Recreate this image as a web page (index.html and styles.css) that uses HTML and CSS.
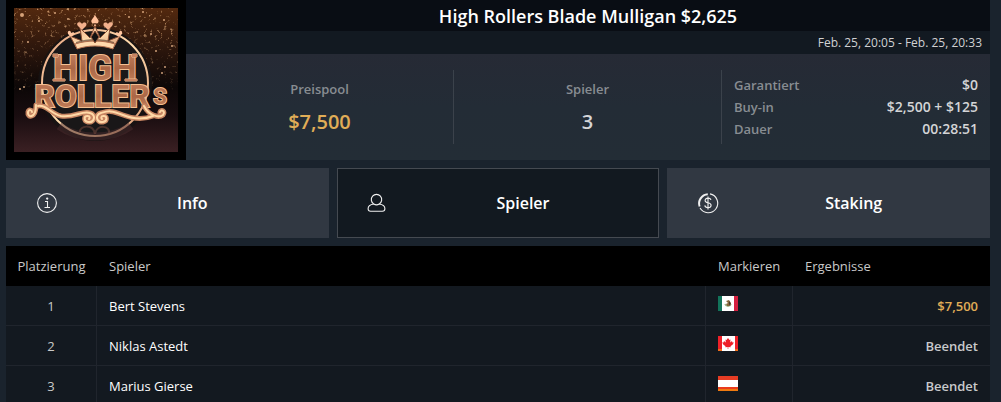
FILE: index.html
```html
<!DOCTYPE html>
<html lang="de">
<head>
    <meta charset="UTF-8" />
    <meta name="viewport" content="width=device-width, initial-scale=1" />
    <title>High Rollers Blade Mulligan $2,625</title>
    <link rel="stylesheet" href="styles.css">
</head>
<body>
    <main class="lobby">
        <header class="tournament">
            <div class="logo">
                <svg viewBox="0 0 164 144" role="img" aria-label="High Rollers">
                    <defs>
                        <linearGradient id="sky" x1="0" y1="0" x2="0" y2="1">
                            <stop offset="0" stop-color="#53290f" />
                            <stop offset="0.3" stop-color="#2a150c" />
                            <stop offset="0.55" stop-color="#0c0707" />
                            <stop offset="0.75" stop-color="#190d10" />
                            <stop offset="1" stop-color="#3b2023" />
                        </linearGradient>
                        <linearGradient id="fade" x1="0" y1="0" x2="0" y2="1">
                            <stop offset="0" stop-color="#ccc" />
                            <stop offset="0.4" stop-color="#666" />
                            <stop offset="0.6" stop-color="#000" />
                        </linearGradient>
                        <linearGradient id="copper" x1="0" y1="0" x2="0" y2="1">
                            <stop offset="0" stop-color="#c98462" />
                            <stop offset="0.5" stop-color="#aa6746" />
                            <stop offset="1" stop-color="#cd8963" />
                        </linearGradient>
                        <linearGradient id="gold" x1="0" y1="0" x2="1" y2="1">
                            <stop offset="0" stop-color="#e9a47f" />
                            <stop offset="0.5" stop-color="#ffdcae" />
                            <stop offset="1" stop-color="#dc9872" />
                        </linearGradient>
                        <mask id="fadeMask">
                            <rect width="164" height="144" fill="url(#fade)" />
                        </mask>
                        <filter id="glitter" x="0" y="0" width="1" height="1">
                            <feTurbulence type="fractalNoise" baseFrequency="0.3" numOctaves="3" seed="7" />
                            <feColorMatrix values="0 0 0 0 0.75  0 0 0 0 0.42  0 0 0 0 0.2  5 0 0 0 -3.1" />
                        </filter>
                    </defs>
                    <rect width="164" height="144" fill="url(#sky)" />
                    <g mask="url(#fadeMask)">
                        <rect width="164" height="144" filter="url(#glitter)" />
                    </g>
                    <g fill="#f6c193" opacity="0.8">
                        <circle cx="8" cy="7" r="2" /><circle cx="25" cy="13" r="1" /><circle cx="41" cy="5" r="1" />
                        <circle cx="54" cy="11" r="1" /><circle cx="14" cy="34" r="1" /><circle cx="150" cy="12" r="1" />
                        <circle cx="137" cy="26" r="1" /><circle cx="158" cy="38" r="1" /><circle cx="151" cy="59" r="1" />
                        <circle cx="148" cy="65" r="1" /><circle cx="6" cy="81" r="1" /><circle cx="10" cy="79" r="1" />
                        <circle cx="115" cy="9" r="1" /><circle cx="129" cy="4" r="1" /><circle cx="142" cy="43" r="1" />
                    </g>
                    <circle cx="81" cy="76" r="57" fill="#161313" opacity="0.85" />
                    <circle cx="81" cy="75" r="53" fill="#191718" stroke="url(#gold)" stroke-width="2" />
                    <path d="M45 118c20 14 52 14 72 0" fill="none" stroke="#4a2c2d" stroke-width="8" opacity="0.5" />
                    <path d="M66 124c-1-6 13-9 15 2 1-10 16-9 14 0" fill="none" stroke="#7a4b40" stroke-width="2" opacity="0.5" />

                    <!-- crown -->
                    <path d="M62 39l-6-11 12 5-2-13 10 10 5-12 5 12 10-10-2 13 12-5-6 11-2-1c-11-3-23-3-34 0z" fill="url(#gold)" stroke="#8a4f35" stroke-width="1" />
                    <path d="M62 39c12-4 26-4 38 0v-5c-12-4-26-4-38 0z" fill="#24130e" opacity="0.5" />
                    <path d="M61 36c13-4 27-4 40 0l-2 5c-11-4-25-4-36 0z" fill="#ffd9ad" stroke="#b06d4d" stroke-width="1" />
                    <path d="M81 23l4 6-4 6-4-6z" fill="#111" stroke="#8a4f35" stroke-width="1" />
                    <path d="M81 7c2 4 5 5 3 8-1 1-2 0-3 0l1 3h-2l1-3c-1 0-2 1-3 0-2-3 1-4 3-8z" fill="#ffbf99" />
                    <path d="M68 22l-4-4c-3-4 3-5 4-2 2-3 6-1 4 2zM94 22l4-4c3-4-3-5-4-2-2-3-6-1-4 2z" fill="#f2b08c" />
                    <path d="M57 29l-3-3c-1-4 3-4 3-1 3-2 5 1 2 2zM105 29l3-3c1-4-3-4-3-1-3-2-5 1-2 2z" fill="#ffc6a0" />

                    <!-- lettering and scrolls -->
                    <g class="lettering" fill="url(#copper)" stroke="#f4bf91" stroke-width="2" paint-order="stroke">
                        <text class="line-high" x="81" y="72">HIGH</text>
                        <path d="M39 71h12v2H39zM111 71h12v2h-12zM39 46h5v3h-5zM118 46h5v3h-5z" fill="#c98462" stroke-width="1" />
                        <text class="line-rollers" x="78" y="99">ROLLER</text>
                        <text class="line-s" x="146" y="96">S</text>
                    </g>
                    <path d="M22 97c0 14-9 13-8 7 1-3 4-2 4 0M24 98c8-2 13 8 23 10 13 2 22-6 29-3 7 2 4 10-2 9-5-1-4-7 0-6 2 0 2 2 1 3" fill="none" stroke="#c88663" stroke-width="5" stroke-linecap="round" />
                    <path d="M130 98c5 10 15 12 19 9 3-4-2-6-3-3M139 108c-10 4-20 3-30-1-12-5-15-4-22-2-7 2-4 10 2 9 5-1 4-7 0-6-2 0-2 2-1 3" fill="none" stroke="#c88663" stroke-width="5" stroke-linecap="round" />
                    <path d="M22 97c0 14-9 13-8 7 1-3 4-2 4 0M24 98c8-2 13 8 23 10 13 2 22-6 29-3 7 2 4 10-2 9-5-1-4-7 0-6 2 0 2 2 1 3" fill="none" stroke="#ffd9a8" stroke-width="2" stroke-linecap="round" />
                    <path d="M130 98c5 10 15 12 19 9 3-4-2-6-3-3M139 108c-10 4-20 3-30-1-12-5-15-4-22-2-7 2-4 10 2 9 5-1 4-7 0-6-2 0-2 2-1 3" fill="none" stroke="#ffd9a8" stroke-width="2" stroke-linecap="round" />
                </svg>
            </div>
            <div class="summary">
                <h1>High Rollers Blade Mulligan $2,625</h1>
                <p class="date">Feb. 25, 20:05 - Feb. 25, 20:33</p>
                <div class="stats">
                    <div class="stat">
                        <span class="stat-label">Preispool</span>
                        <strong class="stat-value gold">$7,500</strong>
                    </div>
                    <div class="stat">
                        <span class="stat-label">Spieler</span>
                        <strong class="stat-value">3</strong>
                    </div>
                    <dl class="details">
                        <div><dt>Garantiert</dt><dd>$0</dd></div>
                        <div><dt>Buy-in</dt><dd>$2,500 + $125</dd></div>
                        <div><dt>Dauer</dt><dd>00:28:51</dd></div>
                    </dl>
                </div>
            </div>
        </header>

        <nav class="tabs">
            <button type="button" class="tab">
                <svg class="icon" viewBox="0 0 20 20" aria-hidden="true">
                    <circle cx="10" cy="10" r="9.4" />
                    <path d="M8 8.5h2.5v6M7.5 14.5h5.5" />
                    <circle cx="10.2" cy="5.6" r="0.6" fill="#fff" />
                </svg>
                <span>Info</span>
            </button>
            <button type="button" class="tab active">
                <svg class="icon" viewBox="0 0 20 20" aria-hidden="true">
                    <path d="M5.700 11a5.200 5.200 0 1 1 5.600 0c3 .4 5.600 2 5.600 4.700 0 1.700-1 2.500-2.500 2.500H2.600c-1.500 0-2.500-.8-2.500-2.500C.1 13 2.700 11.400 5.700 11zM5.700 11c1.700 1.100 3.900 1.100 5.600 0" />
                </svg>
                <span>Spieler</span>
            </button>
            <button type="button" class="tab">
                <svg class="icon" viewBox="0 0 20 20" aria-hidden="true">
                    <path d="M12 .9A9.500 9.500 0 1 1 2 15" />
                    <path d="M1.600 13.500A9.300 9.300 0 0 1 9.800 1.200" stroke-width="2" />
                    <path d="M13 7c-.3-1.300-1.500-1.900-3-1.900s-2.900.8-2.900 2.300c0 3.300 6 1.500 6 4.900 0 1.500-1.300 2.400-3.100 2.400s-3-.8-3.200-2.300M10 3.500v13" />
                </svg>
                <span>Staking</span>
            </button>
        </nav>

        <table class="players">
            <thead>
                <tr>
                    <th class="rank">Platzierung</th>
                    <th>Spieler</th>
                    <th class="flag">Markieren</th>
                    <th class="result-head">Ergebnisse</th>
                </tr>
            </thead>
            <tbody>
                <tr>
                    <td class="rank">1</td>
                    <td>Bert Stevens</td>
                    <td>
                        <svg class="flag-icon" viewBox="0 0 20 15" role="img" aria-label="Mexiko">
                            <rect width="20" height="15" fill="#fff" />
                            <rect width="4" height="15" fill="#12735a" />
                            <rect x="16" width="4" height="15" fill="#d51f3f" />
                            <path d="M7 8c1 3 5 3 6 0" fill="none" stroke="#9bb58b" stroke-width="1.500" />
                            <path d="M8 5l3-1 2 3-1 3H9L8 8l2-1z" fill="#86663c" />
                            <path d="M11 5l2 3-2 1z" fill="#463a2c" />
                        </svg>
                    </td>
                    <td class="result gold">$7,500</td>
                </tr>
                <tr>
                    <td class="rank">2</td>
                    <td>Niklas Astedt</td>
                    <td>
                        <svg class="flag-icon" viewBox="0 0 20 15" role="img" aria-label="Kanada">
                            <rect width="20" height="15" fill="#fff" />
                            <path d="M0 0h4v15H0zM17 0h3v15h-3z" fill="#ee2028" />
                            <path d="M0 13h4v2H0zM17 13h3v2h-3z" fill="#f06d18" />
                            <path d="M10 2l1.500 2 1-.5-.3 3L14 5l.4 1.500 1.300-.2-.7 2-2.500 2 .2 1-2.400-.3v2h-.6v-2l-2.400.3.2-1-2.500-2-.7-2 1.300.2L6 5l1.800 1.500-.3-3 1 .5z" fill="#ee2028" />
                        </svg>
                    </td>
                    <td class="result">Beendet</td>
                </tr>
                <tr>
                    <td class="rank">3</td>
                    <td>Marius Gierse</td>
                    <td>
                        <svg class="flag-icon" viewBox="0 0 20 15" role="img" aria-label="Österreich">
                            <rect width="20" height="15" fill="#fff" />
                            <rect width="20" height="4" fill="#e63c24" />
                            <rect y="11" width="20" height="2" fill="#ea3c1c" />
                            <rect y="13" width="20" height="2" fill="#ee7a10" />
                        </svg>
                    </td>
                    <td class="result">Beendet</td>
                </tr>
            </tbody>
        </table>
    </main>
</body>
</html>
```
FILE: styles.css
```css
* {
    margin: 0;
    padding: 0;
    box-sizing: border-box;
}
body {
    font-family: "Open Sans", "Noto Sans", sans-serif;
    font-size: 13px;
    color: #fff;
    background: #1a232d;
}
.lobby {
    display: flex;
    flex-direction: column;
    gap: 8px;
    padding: 0 11px 0 6px;
}
.tournament {
    display: flex;
}
.logo {
    width: 180px;
    padding: 8px;
    background: #000;
}
.logo svg {
    display: block;
    width: 100%;
}
.lettering {
    font-family: Roboto, "Liberation Sans", sans-serif;
    font-weight: 700;
    text-anchor: middle;
}
.line-high {
    font-size: 35px;
}
.line-rollers {
    font-size: 32px;
}
.line-s {
    font-size: 22px;
}
.summary {
    flex: 1;
    display: flex;
    flex-direction: column;
}
h1 {
    padding-top: 2px;
    background: #090d14;
    font-size: 18px;
    font-weight: 600;
    line-height: 29px;
    text-align: center;
}
.date {
    padding: 0 8px;
    background: #121921;
    color: #d0d1d3;
    font-size: 12px;
    line-height: 23px;
    text-align: right;
}
.stats {
    flex: 1;
    display: grid;
    grid-template-columns: repeat(3, 1fr);
    padding: 16px 0;
    background: linear-gradient(#262a35, #232c36 50%, #232d36);
    font-weight: 600;
}
.stat {
    display: flex;
    flex-direction: column;
    align-items: center;
    justify-content: center;
    gap: 9px;
    padding-top: 3px;
    border-right: 1px solid #3b424b;
}
.stat-label,
.details dt {
    color: #888d92;
}
.stat-value {
    color: #d4d5d7;
    font-size: 20px;
    font-weight: 600;
    line-height: 30px;
}
.gold {
    color: #e0ad57;
}
.details {
    padding: 4px 12px;
    line-height: 22px;
}
.details div {
    display: flex;
    justify-content: space-between;
}
.details dd {
    color: #d4d5d7;
    font-size: 14px;
}
.tabs {
    display: grid;
    grid-template-columns: repeat(3, 1fr);
    gap: 8px;
}
.tab {
    display: flex;
    align-items: center;
    height: 70px;
    padding-left: 30px;
    border: 1px solid #313842;
    background: #313842;
    color: #fff;
    font-family: inherit;
    font-size: 16px;
    font-weight: 600;
    cursor: pointer;
}
.tab.active {
    border-color: #454a51;
    background: #121920;
}
.tab span {
    flex: 1;
}
.icon {
    width: 20px;
    height: 20px;
    fill: none;
    stroke: #f0f0f0;
    stroke-width: 1.1;
    overflow: visible;
}
.players {
    width: 100%;
    border-collapse: separate;
    border-spacing: 0;
    table-layout: fixed;
    background: #131920;
}
.players th,
.players td {
    height: 40px;
    padding: 0 12px;
    text-align: left;
}
.players th {
    background: #000;
    color: #c9c9c9;
    font-weight: 400;
}
.players td {
    border-right: 1px solid #20252d;
    border-bottom: 1px solid #20252d;
}
.players td:last-child {
    border-right: none;
}
.players .rank {
    width: 91px;
    padding: 0;
    text-align: center;
}
.players td.rank {
    color: #c9c9c9;
}
.players .flag {
    width: 87px;
}
.players .result-head {
    width: 197px;
}
.players .result {
    color: #c9cacc;
    font-weight: 600;
    text-align: right;
}
.players .result.gold {
    color: #e0ad57;
}
.flag-icon {
    width: 20px;
    height: 15px;
}
```
